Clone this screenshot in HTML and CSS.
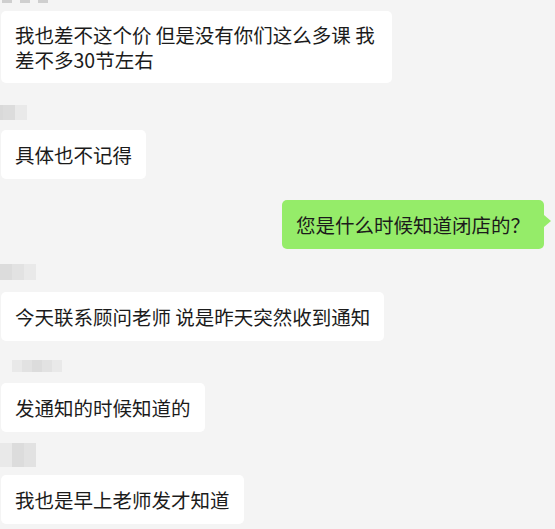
FILE: index.html
```html
<!DOCTYPE html>
<html lang="zh-CN">
<head>
<meta charset="utf-8">
<title>聊天</title>
<link rel="stylesheet" href="styles.css">
</head>
<body>
<div class="chat">
  <div class="name name-top"><span class="m m1"></span><span class="m m2"></span><span class="m m3"></span></div>
  <div class="bubble b1">我也差不这个价 但是没有你们这么多课 我差不多30节左右</div>

  <div class="name n1"><span class="m c1"></span><span class="m c2"></span><span class="m c3"></span></div>
  <div class="bubble b2">具体也不记得</div>

  <div class="bubble mine">您是什么时候知道闭店的？</div>

  <div class="name n2"><span class="m c2"></span><span class="m c1"></span><span class="m c3"></span></div>
  <div class="bubble b4">今天联系顾问老师 说是昨天突然收到通知</div>

  <div class="name n3"><span class="m c3"></span><span class="m c1"></span><span class="m c2"></span><span class="m c1"></span><span class="m c3"></span></div>
  <div class="bubble b5">发通知的时候知道的</div>

  <div class="name n4"><span class="m c3 tall"></span><span class="m c2 tall"></span><span class="m c1 tall"></span></div>
  <div class="bubble b6">我也是早上老师发才知道</div>
</div>
</body>
</html>
```

FILE: styles.css
```css
html, body {
  margin: 0;
  padding: 0;
  background: #f4f4f4;
}

body {
  width: 555px;
  height: 529px;
  overflow: hidden;
  font-family: "Microsoft YaHei", "Noto Sans CJK SC", sans-serif;
}

.chat {
  display: flex;
  flex-direction: column;
  align-items: flex-start;
}

.bubble {
  box-sizing: border-box;
  background: #ffffff;
  color: #1b1b1b;
  font-size: 19.5px;
  line-height: 27px;
  padding: 11px 14px;
  border-radius: 5px;
  margin-left: 1px;
  max-width: 392px;
}

.b1 {
  margin-top: 8px;
  line-height: 25px;
  padding-top: 11px;
  padding-bottom: 11px;
  width: 391px;
}

.name {
  display: flex;
  height: 15px;
}

.m {
  display: block;
  width: 12px;
  height: 100%;
}

.c1 { background: #e2e2e2; }
.c2 { background: #dcdcdc; }
.c3 { background: #e9e9e9; }

.name-top {
  height: 3px;
  margin-left: 2px;
  gap: 8px;
}
.name-top .m { width: 10px; background: #cfcfcf; }

.n1 { margin-top: 22px; }
.n1 .c1 { background: #d9d9d9; width: 3px; }

.n2 { margin-top: 15px; height: 16px; }
.n3 { margin-top: 19px; height: 12px; margin-left: 12px; }
.n3 .m { width: 10px; }
.n4 { margin-top: 11px; height: 24px; }

.b2 { margin-top: 10px; }
.b4 { margin-top: 12px; }
.b5 { margin-top: 11px; }
.b6 { margin-top: 8px; }

.mine {
  position: relative;
  align-self: flex-end;
  margin-right: 11px;
  margin-top: 21px;
  background: #95ec69;
  border-radius: 5px;
}

.mine::after {
  content: "";
  position: absolute;
  right: -7px;
  top: 15px;
  border-style: solid;
  border-width: 6px 0 6px 7px;
  border-color: transparent transparent transparent #95ec69;
}
```
